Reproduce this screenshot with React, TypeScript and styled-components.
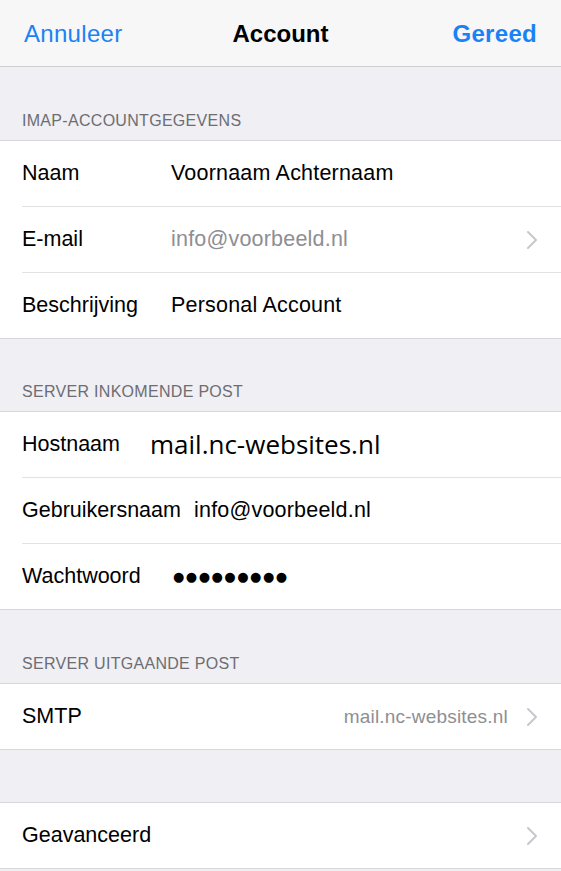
import React from "react";
import styled, { createGlobalStyle } from "styled-components";

const Global = createGlobalStyle`
  html, body { margin: 0; padding: 0; background: #efeff4; }
  body { font-family: "Liberation Sans", Arial, sans-serif; -webkit-font-smoothing: antialiased; }
  * { box-sizing: border-box; }
`;

const Page = styled.div`
  width: 561px;
  min-height: 871px;
  background: #efeff4;
  display: flex;
  flex-direction: column;
`;

const NavBar = styled.div`
  height: 67px;
  background: #f7f7f8;
  border-bottom: 1px solid #cfcfd2;
  display: grid;
  grid-template-columns: 1fr auto 1fr;
  align-items: center;
  padding: 0 24px;
  padding-top: 1px;
`;

const NavButton = styled.div<{ $bold?: boolean; $right?: boolean }>`
  color: #1a82f5;
  font-size: 24px;
  font-weight: ${(p) => (p.$bold ? 700 : 400)};
  text-align: ${(p) => (p.$right ? "right" : "left")};
  letter-spacing: 0.3px;
`;

const NavTitle = styled.div`
  font-size: 24px;
  font-weight: 700;
  color: #000;
`;

const SectionHeader = styled.div<{ $h: number }>`
  height: ${(p) => p.$h}px;
  display: flex;
  align-items: flex-end;
  padding: 0 22px 10px;
  color: #6d6d72;
  font-size: 16px;
  letter-spacing: 0.3px;
`;

const Spacer = styled.div<{ $h: number }>`
  height: ${(p) => p.$h}px;
`;

const Group = styled.div`
  background: #fff;
  border-top: 1px solid #d8d8dc;
  border-bottom: 1px solid #d8d8dc;
`;

const Row = styled.div<{ $first?: boolean }>`
  height: ${(p) => (p.$first ? 65 : 66)}px;
  display: flex;
  align-items: center;
  margin-left: 22px;
  padding-right: 23px;
  border-top: ${(p) => (p.$first ? "none" : "1px solid #e2e2e4")};
`;

const Label = styled.div<{ $w?: number }>`
  font-size: 21.5px;
  color: #000;
  letter-spacing: 0;
  width: ${(p) => (p.$w ? `${p.$w}px` : "auto")};
  flex-shrink: 0;
  white-space: nowrap;
`;

const Value = styled.div<{ $muted?: boolean }>`
  font-size: 21.5px;
  letter-spacing: 0.2px;
  color: ${(p) => (p.$muted ? "#8e8e93" : "#000")};
  flex: 1;
  white-space: nowrap;
`;

const HostValue = styled.div`
  font-family: "Open Sans", sans-serif;
  font-size: 26px;
  color: #000;
  flex: 1;
  white-space: nowrap;
  margin-top: -2px;
`;

const Dots = styled.div`
  font-family: "DejaVu Sans", sans-serif;
  font-size: 13px;
  letter-spacing: 1.5px;
  color: #000;
  flex: 1;
`;

const Detail = styled.div`
  font-size: 19px;
  color: #8e8e93;
  margin-left: auto;
  margin-right: 18px;
  letter-spacing: 0.2px;
`;

const ChevronSvg = styled.svg<{ $push?: boolean }>`
  flex-shrink: 0;
  margin-left: ${(p) => (p.$push ? "auto" : "0")};
`;

const Chevron = ({ push }: { push?: boolean }) => (
  <ChevronSvg $push={push} width="12" height="20" viewBox="0 0 12 20">
    <path d="M2 2 L10 10 L2 18" fill="none" stroke="#c7c7cc" strokeWidth="2" strokeLinecap="round" strokeLinejoin="round" />
  </ChevronSvg>
);

export default function App() {
  return (
    <Page>
      <Global />
      <NavBar>
        <NavButton>Annuleer</NavButton>
        <NavTitle>Account</NavTitle>
        <NavButton $bold $right>Gereed</NavButton>
      </NavBar>

      <SectionHeader $h={73}>IMAP-ACCOUNTGEGEVENS</SectionHeader>
      <Group>
        <Row $first>
          <Label $w={149}>Naam</Label>
          <Value>Voornaam Achternaam</Value>
        </Row>
        <Row>
          <Label $w={149}>E-mail</Label>
          <Value $muted>info@voorbeeld.nl</Value>
          <Chevron />
        </Row>
        <Row>
          <Label $w={149}>Beschrijving</Label>
          <Value>Personal Account</Value>
        </Row>
      </Group>

      <SectionHeader $h={72}>SERVER INKOMENDE POST</SectionHeader>
      <Group>
        <Row $first>
          <Label $w={128}>Hostnaam</Label>
          <HostValue>mail.nc-websites.nl</HostValue>
        </Row>
        <Row>
          <Label $w={172}>Gebruikersnaam</Label>
          <Value>info@voorbeeld.nl</Value>
        </Row>
        <Row>
          <Label $w={151}>Wachtwoord</Label>
          <Dots>●●●●●●●●●</Dots>
        </Row>
      </Group>

      <SectionHeader $h={73}>SERVER UITGAANDE POST</SectionHeader>
      <Group>
        <Row $first>
          <Label>SMTP</Label>
          <Detail>mail.nc-websites.nl</Detail>
          <Chevron />
        </Row>
      </Group>

      <Spacer $h={52} />
      <Group>
        <Row $first>
          <Label>Geavanceerd</Label>
          <Chevron push />
        </Row>
      </Group>
    </Page>
  );
}
